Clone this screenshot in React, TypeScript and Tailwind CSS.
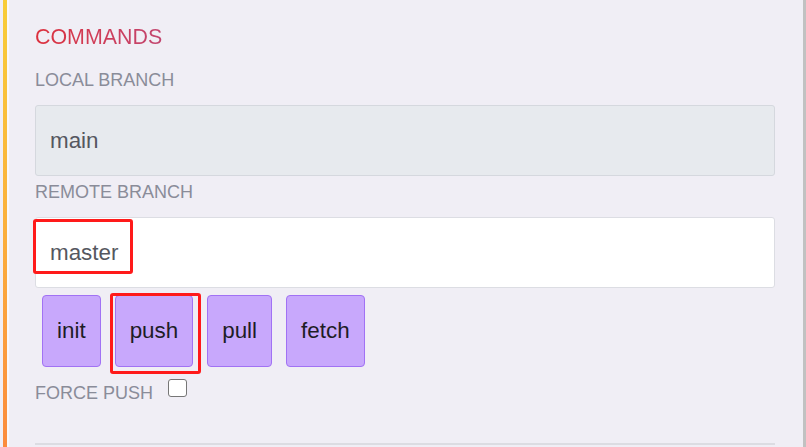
import { useState } from 'react'

const actions = ['init', 'push', 'pull', 'fetch']

export default function App() {
    const [force, setForce] = useState(false)

    return (
        <div className="relative flex w-[806px] h-[447px] overflow-hidden bg-[#f0eef5] font-['Liberation_Sans',Arial,sans-serif]">
            {/* accent strip */}
            <div className="w-[3px] shrink-0" />
            <div className="w-[4px] shrink-0 bg-gradient-to-b from-[#f8cd38] via-[#fbb03c] to-[#fb8b3d]" />
            <div className="w-[2px] shrink-0 bg-[#f8f7fb]" />

            <div className="flex-1 flex flex-col pl-[26px] pr-[28px] pt-[25px]">
                <h2 className="text-[21.4px] leading-[24px] uppercase bg-gradient-to-r from-[#dc2f3c] to-[#c2456f] bg-clip-text text-transparent w-fit">
                    Commands
                </h2>

                <label className="mt-[21px] text-[18px] leading-[20px] uppercase text-[#8a8c99]">
                    Local branch
                </label>
                <div className="mt-[15px] h-[71px] flex items-center px-[14px] bg-[#e7eaee] border border-[#d5d8de] rounded-[3px] text-[22.4px] text-[#555760]">
                    main
                </div>

                <label className="mt-[6px] text-[18px] leading-[20px] uppercase text-[#8a8c99]">
                    Remote branch
                </label>
                <div className="relative mt-[15px] h-[71px] flex items-center px-[14px] bg-white border border-[#dcdde3] rounded-[3px] text-[22.4px] text-[#555760]">
                    master
                    <div className="absolute -left-[3px] top-[1px] w-[100px] h-[55px] border-[3px] border-[#ff1a1a] rounded-[3px] pointer-events-none" />
                </div>

                <div className="mt-[7px] flex gap-[14px] pl-[7px]">
                    {actions.map(a => (
                        <button
                            key={a}
                            className="relative h-[72px] px-[14px] bg-[#c8a8fc] border border-[#a172f4] rounded-[4px] text-[22.4px] text-[#1e1d26]"
                        >
                            {a}
                            {a === 'push' && (
                                <span className="absolute -left-[6px] -top-[3px] w-[91px] h-[81px] border-[3px] border-[#ff1a1a] rounded-[3px] pointer-events-none" />
                            )}
                        </button>
                    ))}
                </div>

                <div className="mt-[12px] flex items-start gap-[15px]">
                    <span className="mt-[4px] text-[18px] leading-[20px] uppercase text-[#8a8c99]">Force push</span>
                    <input
                        type="checkbox"
                        checked={force}
                        onChange={e => setForce(e.target.checked)}
                        className="appearance-none w-[19px] h-[18px] bg-white border-[1.5px] border-[#767676] rounded-[3px]"
                    />
                </div>

                <div className="mt-auto mb-[2px] h-[2px] bg-[#dcdce2]" />
            </div>

            <div className="w-[3px] shrink-0 bg-[#c1c1c1]" />
        </div>
    )
}
